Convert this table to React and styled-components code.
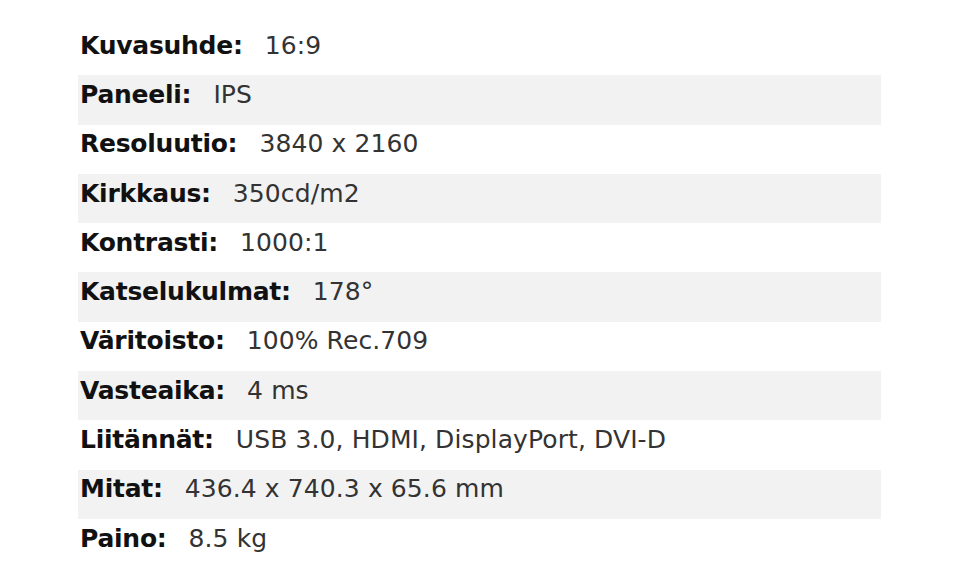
import React from "react";
import styled, { createGlobalStyle } from "styled-components";

const Global = createGlobalStyle`
  html, body { margin: 0; padding: 0; background: #fff; }
  body { font-family: "DejaVu Sans", "Liberation Sans", sans-serif; }
`;

const Page = styled.div`
  padding: 26px 0 0 78px;
  width: 803px;
`;

const Table = styled.div`
  display: flex;
  flex-direction: column;
`;

const Row = styled.div`
  display: flex;
  align-items: center;
  box-sizing: border-box;
  height: 49.3px;
  padding: 0 0 11px 2px;
  background: ${(p) => (p.$striped ? "#f2f2f2" : "transparent")};
  white-space: nowrap;
  font-feature-settings: "calt" 0;
`;

const Label = styled.span`
  font-size: 25px;
  font-weight: 700;
  letter-spacing: -0.25px;
  color: #111;
  margin-right: 22px;
`;

const Value = styled.span`
  font-size: 25px;
  font-weight: 400;
  letter-spacing: 0.1px;
  color: #333;
`;

const specs = [
  ["Kuvasuhde:", "16:9"],
  ["Paneeli:", "IPS"],
  ["Resoluutio:", "3840 x 2160"],
  ["Kirkkaus:", "350cd/m2"],
  ["Kontrasti:", "1000:1"],
  ["Katselukulmat:", "178°"],
  ["Väritoisto:", "100% Rec.709"],
  ["Vasteaika:", "4 ms"],
  ["Liitännät:", "USB 3.0, HDMI, DisplayPort, DVI-D"],
  ["Mitat:", "436.4 x 740.3 x 65.6 mm"],
  ["Paino:", "8.5 kg"],
];

export default function App() {
  return (
    <>
      <Global />
      <Page>
        <Table>
          {specs.map(([k, v], i) => (
            <Row key={k} $striped={i % 2 === 1}>
              <Label>{k}</Label>
              <Value>{v}</Value>
            </Row>
          ))}
        </Table>
      </Page>
    </>
  );
}
